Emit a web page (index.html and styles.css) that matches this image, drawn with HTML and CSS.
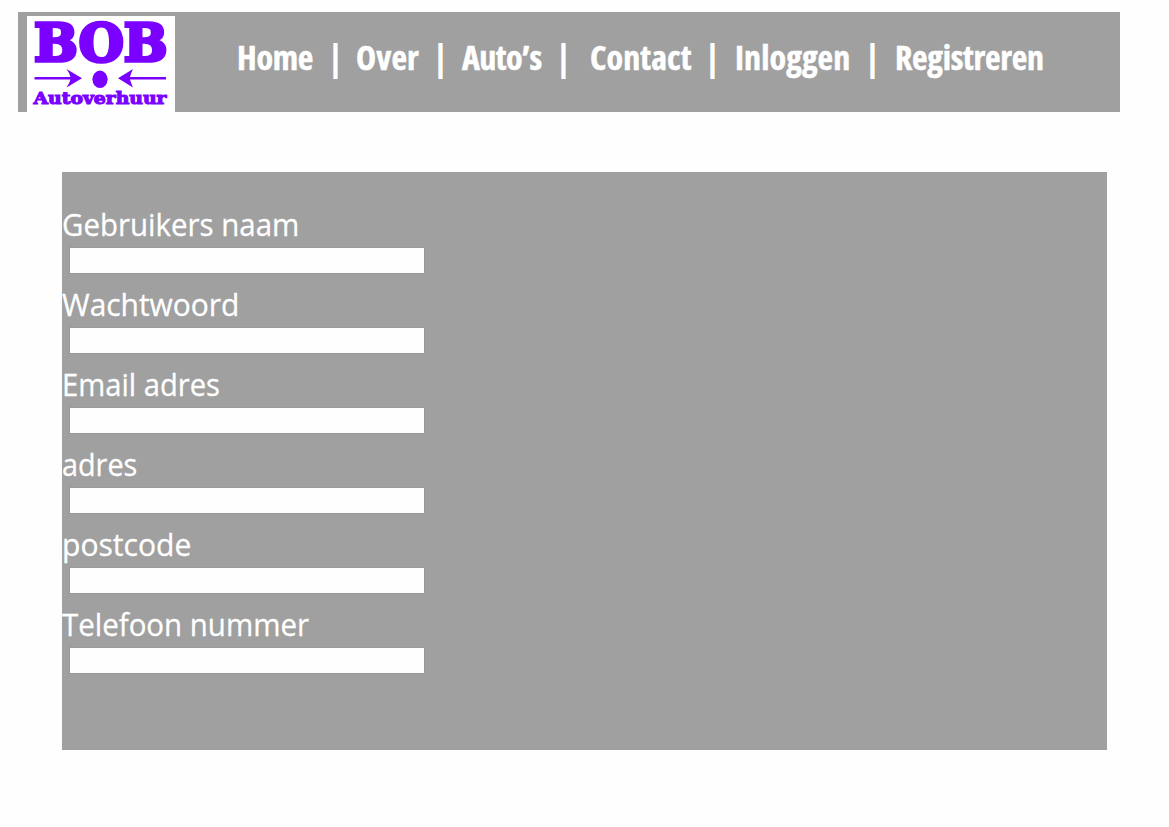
FILE: index.html
```html
<!DOCTYPE html>
<html lang="nl">
<head>
<meta charset="utf-8">
<title>BOB Autoverhuur - Registreren</title>
<link rel="stylesheet" href="styles.css">
</head>
<body>
<header class="header">
  <a class="logo" href="#">
    <svg class="logo-art" viewBox="0 0 148 96" width="148" height="96">
      <text class="logo-name" x="7" y="45" textLength="133.5" lengthAdjust="spacingAndGlyphs">BOB</text>
      <path d="M7.5 60.9H43.5Q42.5 57 39.5 53L55 62.2L39.5 71.5Q42.5 67.5 43.5 63.6H7.5ZM139 60.9H103Q104 57 106 53L91 62.2L106 71.5Q104 67.5 103 63.6H139Z"/>
      <ellipse cx="73" cy="63.3" rx="7.6" ry="8.7"/>
      <text class="logo-sub" x="6.5" y="87.7" textLength="133" lengthAdjust="spacingAndGlyphs">Autoverhuur</text>
    </svg>
  </a>
  <nav class="nav">
    <a class="home" href="#">Home</a><span class="bar">|</span>
    <a href="#">Over</a><span class="bar">|</span>
    <a class="autos" href="#">Auto’s</a><span class="bar">|</span>
    <a class="contact" href="#">Contact</a><span class="bar">|</span>
    <a class="login" href="#">Inloggen</a><span class="bar">|</span>
    <a class="register" href="#">Registreren</a>
  </nav>
</header>
<form class="panel">
  <label class="field"><span class="caption username">Gebruikers naam</span><input class="input" type="text"></label>
  <label class="field"><span class="caption password">Wachtwoord</span><input class="input" type="password"></label>
  <label class="field"><span class="caption email">Email adres</span><input class="input" type="text"></label>
  <label class="field"><span class="caption address">adres</span><input class="input" type="text"></label>
  <label class="field"><span class="caption postcode">postcode</span><input class="input" type="text"></label>
  <label class="field"><span class="caption phone">Telefoon nummer</span><input class="input" type="text"></label>
</form>
</body>
</html>
```
FILE: styles.css
```css
* { box-sizing: border-box; }
body {
  margin: 0;
  padding: 12px 0 0 18px;
  background: #fefefe;
  font-family: "Open Sans", sans-serif;
  color: #fff;
}
.header {
  display: flex;
  width: 1102px;
  height: 100px;
  padding: 4px 0 0 9px;
  background: #a0a0a0;
}
.logo {
  width: 148px;
  height: 96px;
  background: #fff;
}
.logo-art { display: block; overflow: visible; fill: #7a00ff; }
.logo-name, .logo-sub {
  font-family: "DejaVu Serif", serif;
  font-weight: bold;
  stroke: #7a00ff;
}
.logo-name { font-size: 53px; stroke-width: 3.6px; }
.logo-sub { font-size: 16.5px; stroke-width: 1.1px; }
.nav {
  display: grid;
  grid-template-columns: 80px 41px 63px 43px 80px 43px 107px 41px 119px 41px 152px;
  margin-left: 60px;
  padding-top: 18px;
  height: 66px;
  font-size: 34px;
  font-weight: 700;
  font-stretch: 75%;
  line-height: 46px;
  letter-spacing: .1px;
  white-space: nowrap;
}
.nav a {
  color: #fff;
  text-decoration: none;
  -webkit-text-stroke: .5px #fff;
}
.nav .home { padding-left: 2px; letter-spacing: -.3px; }
.nav .autos { letter-spacing: -.6px; }
.nav .contact { padding-left: 5px; }
.nav .login { padding-left: 2px; }
.nav .register { padding-left: 2px; letter-spacing: -.3px; }
.bar {
  font-size: 36px;
  font-weight: 700;
  line-height: 46px;
  text-align: center;
}
.panel {
  width: 1045px;
  height: 578px;
  margin: 60px 0 0 44px;
  padding-top: 28px;
  background: #a0a0a0;
}
.field { display: block; height: 80px; }
.caption {
  display: block;
  width: max-content;
  height: 48px;
  font-size: 31.5px;
  line-height: 48px;
  transform: scaleX(.935);
  transform-origin: left;
  -webkit-text-stroke: .3px #fff;
}
.caption.password { transform: scaleX(.95); }
.caption.email { transform: scaleX(.926); }
.caption.address { transform: scaleX(.914); }
.caption.postcode { transform: scaleX(.955); }
.input {
  display: block;
  width: 354px;
  height: 25px;
  margin-left: 8px;
  padding: 0 4px;
  border: 0;
  background: #fefefe;
  box-shadow: 0 0 0 1px #999;
}
```
